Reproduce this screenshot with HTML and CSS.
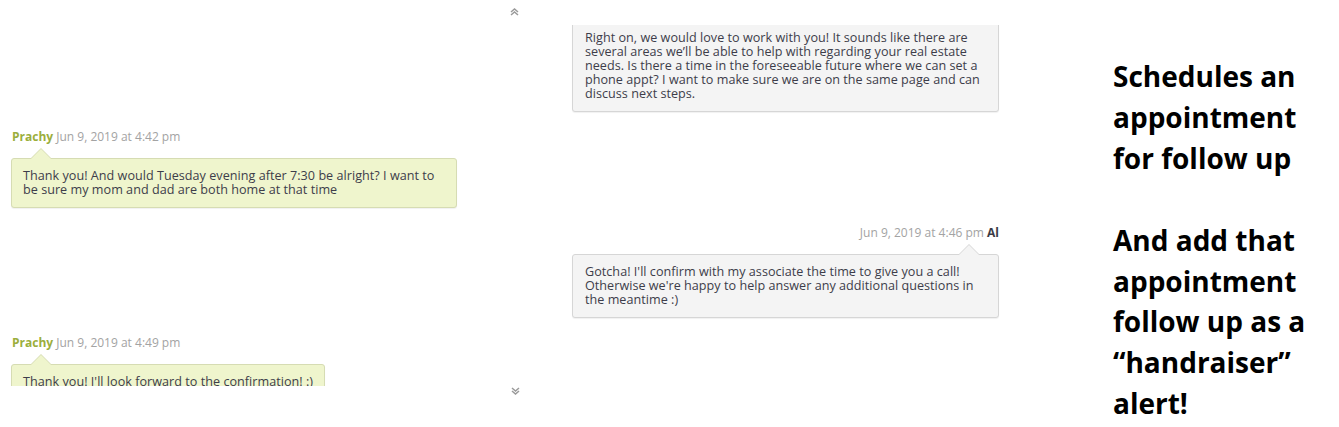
FILE: index.html
```html
<!DOCTYPE html>
<html>
<head>
<meta charset="utf-8">
<link rel="stylesheet" href="styles.css">
</head>
<body>
<div class="page">
  <div class="chat">
    <div class="chev-bar top">
      <svg width="9" height="8" viewBox="0 0 9 8"><path d="M1 4 L4.5 1 L8 4 M1 7 L4.5 4 L8 7" fill="none" stroke="#9a9a9a" stroke-width="1.5"/></svg>
    </div>
    <div class="scroll">
      <div class="thread">
        <div class="msg out first">
          <div class="bubble gray">Right on, we would love to work with you! It sounds like there are<br>several areas we’ll be able to help with regarding your real estate<br>needs. Is there a time in the foreseeable future where we can set a<br>phone appt? I want to make sure we are on the same page and can<br>discuss next steps.</div>
        </div>
        <div class="msg in">
          <div class="meta"><span class="name">Prachy</span> <span class="date">Jun 9, 2019 at 4:42 pm</span></div>
          <div class="bubble green wide">Thank you! And would Tuesday evening after 7:30 be alright? I want to<br>be sure my mom and dad are both home at that time</div>
        </div>
        <div class="msg out">
          <div class="meta"><span class="date">Jun 9, 2019 at 4:46 pm</span> <span class="agent">Al</span></div>
          <div class="bubble gray">Gotcha! I'll confirm with my associate the time to give you a call!<br>Otherwise we're happy to help answer any additional questions in<br>the meantime :)</div>
        </div>
        <div class="msg in">
          <div class="meta"><span class="name">Prachy</span> <span class="date">Jun 9, 2019 at 4:49 pm</span></div>
          <div class="bubble green">Thank you! I'll look forward to the confirmation! :)</div>
        </div>
      </div>
    </div>
    <div class="chev-bar bottom">
      <svg width="9" height="8" viewBox="0 0 9 8"><path d="M1 1 L4.5 4 L8 1 M1 4 L4.5 7 L8 4" fill="none" stroke="#9a9a9a" stroke-width="1.5"/></svg>
    </div>
  </div>
  <div class="note">
    <p>Schedules an<br>appointment<br>for follow up</p>
    <p>And add that<br>appointment<br>follow up as a<br>“handraiser”<br>alert!</p>
  </div>
</div>
</body>
</html>
```
FILE: styles.css
```css
html, body {
  margin: 0;
  padding: 0;
  background: #ffffff;
}

.page {
  display: flex;
  align-items: flex-start;
  width: 1339px;
  height: 427px;
  overflow: hidden;
}

.chat {
  width: 1027px;
  flex: none;
  display: flex;
  flex-direction: column;
  font-family: "Open Sans", "Liberation Sans", sans-serif;
  font-size: 12px;
}

.chev-bar {
  display: flex;
  justify-content: center;
  padding-left: 2px;
}

.chev-bar.top {
  height: 25px;
  align-items: flex-start;
  padding-top: 8px;
  box-sizing: border-box;
}

.chev-bar.bottom {
  height: 14px;
  padding-top: 1px;
  padding-left: 3px;
  box-sizing: border-box;
}

.scroll {
  height: 361px;
  overflow: hidden;
  padding: 0 28px 0 11px;
}

.thread {
  display: flex;
  flex-direction: column;
  gap: 17px;
  margin-top: -5px;
}

.msg {
  display: flex;
  flex-direction: column;
}

.msg.in {
  align-items: flex-start;
}

.msg.out {
  align-items: flex-end;
}

.meta {
  height: 16px;
  line-height: 16px;
  margin-bottom: 13px;
  white-space: nowrap;
}

.msg.in .meta {
  padding-left: 1px;
}

.name {
  color: #9bae3c;
  font-weight: 700;
}

.agent {
  color: #3c3c46;
  font-weight: 700;
}

.date {
  color: #a3a3a3;
}

.bubble {
  position: relative;
  box-sizing: border-box;
  padding: 10px 11px;
  border: 1px solid;
  border-radius: 3px;
  font-size: 12.6px;
  letter-spacing: 0.03px;
  line-height: 14px;
  color: #3d3d4a;
  white-space: nowrap;
  box-shadow: 0 1px 1px rgba(0, 0, 0, 0.06);
}

.bubble.gray {
  width: 427px;
  background: #f4f4f4;
  border-color: #d6d6d6;
  padding-left: 12px;
}

.bubble.green {
  background: #eff5cd;
  border-color: #d6dcb3;
}

.bubble.green.wide {
  width: 446px;
}

.bubble::before,
.bubble::after {
  content: "";
  position: absolute;
  width: 0;
  height: 0;
  border-style: solid;
}

.bubble::before {
  top: -11px;
  border-width: 0 11px 11px 11px;
}

.bubble::after {
  top: -10px;
  border-width: 0 10px 10px 10px;
}

.bubble.green::before {
  left: 18px;
  border-color: transparent transparent #d6dcb3 transparent;
}

.bubble.green::after {
  left: 19px;
  border-color: transparent transparent #eff5cd transparent;
}

.bubble.gray::before {
  right: 18px;
  border-color: transparent transparent #d6d6d6 transparent;
}

.bubble.gray::after {
  right: 19px;
  border-color: transparent transparent #f4f4f4 transparent;
}

.msg.first .bubble::before,
.msg.first .bubble::after {
  display: none;
}

.note {
  margin-left: 86px;
  padding-top: 56px;
  font-family: "Open Sans", "Liberation Sans", sans-serif;
  font-weight: 700;
  font-size: 28px;
  line-height: 40.9px;
  color: #000000;
  white-space: nowrap;
}

.note p {
  margin: 0 0 40.9px 0;
}
```
